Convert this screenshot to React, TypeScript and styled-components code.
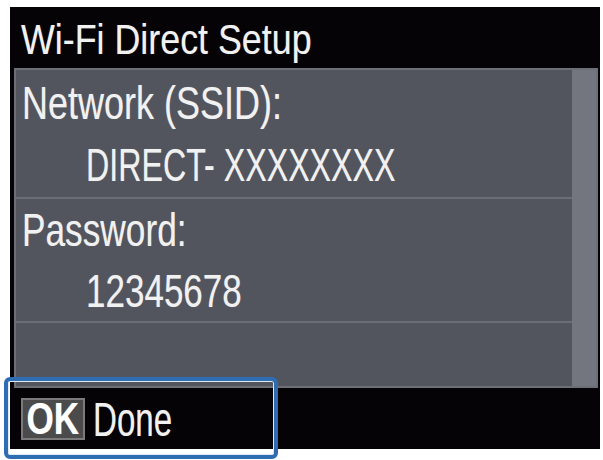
import React from "react";
import styled, { createGlobalStyle } from "styled-components";

const GlobalStyle = createGlobalStyle`
  html, body {
    margin: 0;
    padding: 0;
    background: #ffffff;
  }
  body {
    font-family: "Liberation Sans", Arial, sans-serif;
  }
`;

const Page = styled.div`
  position: relative;
  width: 603px;
  height: 460px;
  box-sizing: border-box;
  padding: 7px 3px 11px 10px;
  overflow: hidden;
`;

const Screen = styled.div`
  width: 590px;
  height: 442px;
  background: #050305;
  display: flex;
  flex-direction: column;
  color: #f1f1f1;
`;

const TitleBar = styled.div`
  height: 61px;
  box-sizing: border-box;
  padding: 3px 0 0 11px;
  display: flex;
  align-items: center;
  font-size: 43px;
  line-height: 43px;
`;

const Cond = styled.span<{ $sx: number; $origin?: string }>`
  display: inline-block;
  white-space: nowrap;
  transform: scaleX(${(p) => p.$sx});
  transform-origin: ${(p) => p.$origin ?? "left center"};
  text-shadow: 0 0 1px rgba(255, 255, 255, 0.35);
`;

const Panel = styled.div`
  margin: 0 2px 0 4px;
  height: 320px;
  box-sizing: border-box;
  border: 2px solid #6c6f77;
  background: #52555d;
  display: flex;
`;

const List = styled.div`
  flex: 1;
  display: flex;
  flex-direction: column;
`;

const Scrollbar = styled.div`
  width: 24px;
  background: #73767e;
`;

const Row = styled.div<{ $h: number; $pt?: number; $line?: number }>`
  height: ${(p) => p.$h}px;
  box-sizing: border-box;
  padding-top: ${(p) => p.$pt ?? 0}px;
  font-size: 47px;
  line-height: ${(p) => p.$line ?? 62}px;
  & + & {
    border-top: 2px solid #6b6e77;
  }
`;

const Label = styled.div`
  padding-left: 6px;
`;

const Value = styled.div`
  padding-left: 70px;
`;

const Footer = styled.div`
  flex: 1;
  display: flex;
  align-items: center;
  padding-left: 11px;
`;

const FocusItem = styled.div`
  position: relative;
  width: 240px;
  height: 42px;
  display: flex;
  align-items: center;
  gap: 8px;
`;

const FocusRing = styled.div`
  position: absolute;
  left: -17px;
  right: -17px;
  top: -21px;
  bottom: -19px;
  border: 4px solid #2f6db3;
  border-radius: 6px;
  box-shadow: inset 0 0 0 1px #dfe8f3;
  pointer-events: none;
`;

const OkKey = styled.div`
  width: 64px;
  height: 42px;
  box-sizing: border-box;
  background: #4b4b4c;
  border: 2px solid #7b7b7c;
  display: flex;
  align-items: center;
  justify-content: center;
  font-size: 45px;
  font-weight: bold;
  line-height: 38px;
  color: #ffffff;
`;

const Action = styled.div`
  font-size: 48px;
  line-height: 42px;
  padding-top: 2px;
`;

export default function App() {
  return (
    <>
      <GlobalStyle />
      <Page>
        <Screen>
          <TitleBar>
            <Cond $sx={0.833}>Wi-Fi Direct Setup</Cond>
          </TitleBar>
          <Panel>
            <List>
              <Row $h={127} $pt={2}>
                <Label>
                  <Cond $sx={0.766}>Network (SSID):</Cond>
                </Label>
                <Value>
                  <Cond $sx={0.685}>DIRECT- XXXXXXXX</Cond>
                </Value>
              </Row>
              <Row $h={124} $line={61}>
                <Label>
                  <Cond $sx={0.75}>Password:</Cond>
                </Label>
                <Value>
                  <Cond $sx={0.745}>12345678</Cond>
                </Value>
              </Row>
              <Row $h={65} />
            </List>
            <Scrollbar />
          </Panel>
          <Footer>
            <FocusItem>
              <OkKey>
                <Cond $sx={0.78} $origin="center">OK</Cond>
              </OkKey>
              <Action>
                <Cond $sx={0.69}>Done</Cond>
              </Action>
              <FocusRing />
            </FocusItem>
          </Footer>
        </Screen>
      </Page>
    </>
  );
}
